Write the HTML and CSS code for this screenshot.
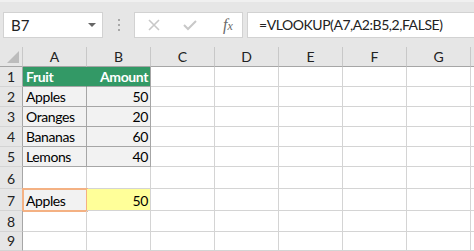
FILE: index.html
```html
<!DOCTYPE html>
<html lang="en">
  <head>
    <meta charset="UTF-8" />
    <meta name="viewport" content="width=device-width, initial-scale=1.0" />
    <title>VLOOKUP</title>
    <link rel="stylesheet" href="styles.css">
  </head>
  <body>
    <div class="formula-bar">
      <div class="name-box">
        <span>B7</span>
        <span class="caret"></span>
      </div>
      <div class="grip"><i></i><i></i><i></i></div>
      <div class="fx-tools">
        <svg class="tool" width="12" height="12" viewBox="0 0 12 12">
          <path d="M1 1 L11 11 M11 1 L1 11" stroke="#c8c8c8" stroke-width="1.6" fill="none" />
        </svg>
        <svg class="tool" width="14" height="12" viewBox="0 0 14 12">
          <path d="M1 6 L5 10 L13 2" stroke="#c8c8c8" stroke-width="2" fill="none" />
        </svg>
        <span class="fx">f<sub>x</sub></span>
      </div>
      <div class="formula-input">=VLOOKUP(A7,A2:B5,2,FALSE)</div>
    </div>

    <div class="sheet">
      <!-- column headers -->
      <div class="corner"><span class="corner-mark"></span></div>
      <div class="ch">A</div>
      <div class="ch">B</div>
      <div class="ch">C</div>
      <div class="ch">D</div>
      <div class="ch">E</div>
      <div class="ch">F</div>
      <div class="ch">G</div>
      <div class="ch last"></div>

      <div class="rh">1</div>
      <div class="c hd hd-a">Fruit</div>
      <div class="c hd hd-b num">Amount</div>
      <div class="c"></div><div class="c"></div><div class="c"></div><div class="c"></div><div class="c"></div><div class="c last"></div>

      <div class="rh">2</div>
      <div class="c dt">Apples</div>
      <div class="c dt num">50</div>
      <div class="c"></div><div class="c"></div><div class="c"></div><div class="c"></div><div class="c"></div><div class="c last"></div>

      <div class="rh">3</div>
      <div class="c dt">Oranges</div>
      <div class="c dt num">20</div>
      <div class="c"></div><div class="c"></div><div class="c"></div><div class="c"></div><div class="c"></div><div class="c last"></div>

      <div class="rh">4</div>
      <div class="c dt">Bananas</div>
      <div class="c dt num">60</div>
      <div class="c"></div><div class="c"></div><div class="c"></div><div class="c"></div><div class="c"></div><div class="c last"></div>

      <div class="rh">5</div>
      <div class="c dt">Lemons</div>
      <div class="c dt num">40</div>
      <div class="c"></div><div class="c"></div><div class="c"></div><div class="c"></div><div class="c"></div><div class="c last"></div>

      <div class="rh">6</div>
      <div class="c"></div><div class="c"></div><div class="c"></div><div class="c"></div><div class="c"></div><div class="c"></div><div class="c"></div><div class="c last"></div>

      <div class="rh">7</div>
      <div class="c lookup">Apples</div>
      <div class="c result num">50</div>
      <div class="c"></div><div class="c"></div><div class="c"></div><div class="c"></div><div class="c"></div><div class="c last"></div>

      <div class="rh">8</div>
      <div class="c"></div><div class="c"></div><div class="c"></div><div class="c"></div><div class="c"></div><div class="c"></div><div class="c"></div><div class="c last"></div>

      <div class="rh">9</div>
      <div class="c"></div><div class="c"></div><div class="c"></div><div class="c"></div><div class="c"></div><div class="c"></div><div class="c"></div><div class="c last"></div>
    </div>
  </body>
</html>
```

FILE: styles.css
```css
* {
  margin: 0;
  padding: 0;
  box-sizing: border-box;
}

body {
  font-family: 'Lato', 'Liberation Sans', sans-serif;
  background: #ffffff;
  color: #000000;
  width: 474px;
  height: 251px;
  overflow: hidden;
}

/* formula bar */

.formula-bar {
  height: 47px;
  background: #e6e6e6;
  border-top: 2px solid #f0f0f0;
  display: flex;
  align-items: flex-start;
  padding: 10px 0 0 3px;
  overflow: hidden;
}

.name-box {
  width: 100px;
  height: 26px;
  background: #ffffff;
  border: 1px solid #d2d2d2;
  display: flex;
  align-items: center;
  justify-content: space-between;
  padding: 0 6px 0 7px;
  font-size: 15px;
  color: #222222;
}

.caret {
  width: 0;
  height: 0;
  border-left: 4px solid transparent;
  border-right: 4px solid transparent;
  border-top: 4px solid #666666;
}

.grip {
  width: 31px;
  height: 26px;
  display: flex;
  flex-direction: column;
  align-items: center;
  justify-content: center;
  gap: 3px;
}

.grip i {
  width: 2px;
  height: 2px;
  background: #a8a8a8;
}

.fx-tools {
  width: 109px;
  height: 26px;
  background: #ffffff;
  border: 1px solid #d2d2d2;
  display: flex;
  align-items: center;
  padding: 0 0 0 13px;
}

.tool {
  display: block;
}

.fx-tools .tool + .tool {
  margin-left: 23px;
}

.fx {
  margin-left: 26px;
  font-family: 'Liberation Serif', serif;
  font-style: italic;
  font-size: 16px;
  color: #6a6a6a;
}

.fx sub {
  font-size: 12px;
  vertical-align: baseline;
}

.formula-input {
  flex: 1;
  height: 26px;
  margin-left: 4px;
  margin-right: -4px;
  background: #ffffff;
  border: 1px solid #d2d2d2;
  padding: 0 0 0 11px;
  font-size: 14px;
  letter-spacing: -0.45px;
  line-height: 24px;
  color: #222222;
  white-space: nowrap;
}

/* sheet grid */

.sheet {
  display: grid;
  grid-template-columns: 23px repeat(7, 64px) 1fr;
  grid-template-rows: 20px 20px 20px 20px 20px 20px 22px 22px 21px 1fr;
  height: 204px;
  font-size: 14px;
}

.corner,
.ch {
  background: #e6e6e6;
  border-right: 1px solid #c8c8c8;
  border-bottom: 1px solid #a6a6a6;
}

.corner {
  position: relative;
}

.corner-mark {
  position: absolute;
  right: 3px;
  bottom: 3px;
  width: 0;
  height: 0;
  border-left: 12px solid transparent;
  border-bottom: 12px solid #bcbcbc;
}

.ch {
  display: flex;
  align-items: flex-end;
  justify-content: center;
  padding-bottom: 1px;
  color: #222222;
}

.rh {
  background: #e6e6e6;
  border-right: 1px solid #a6a6a6;
  border-bottom: 1px solid #d4d4d4;
  display: flex;
  align-items: flex-end;
  justify-content: center;
  padding-bottom: 1px;
  color: #222222;
}

.c {
  border-right: 1px solid #d4d4d4;
  border-bottom: 1px solid #d4d4d4;
  display: flex;
  align-items: flex-end;
  padding: 0 2px 1px 3px;
  letter-spacing: -0.4px;
  white-space: nowrap;
}

.ch.last,
.c.last {
  border-right: none;
}

.num {
  justify-content: flex-end;
}

.hd {
  background: #339966;
  color: #ffffff;
  font-weight: bold;
  border-bottom-color: #a6a6a6;
}

.hd-a {
  border-right-color: #339966;
}

.hd-b {
  border-right-color: #a6a6a6;
}

.dt {
  background: #f2f2f2;
  border-right-color: #a6a6a6;
  border-bottom-color: #a6a6a6;
}

.lookup {
  background: #f2f2f2;
  outline: 2px solid #f4b183;
  outline-offset: -1px;
}

.result {
  background: #ffff99;
}
```
